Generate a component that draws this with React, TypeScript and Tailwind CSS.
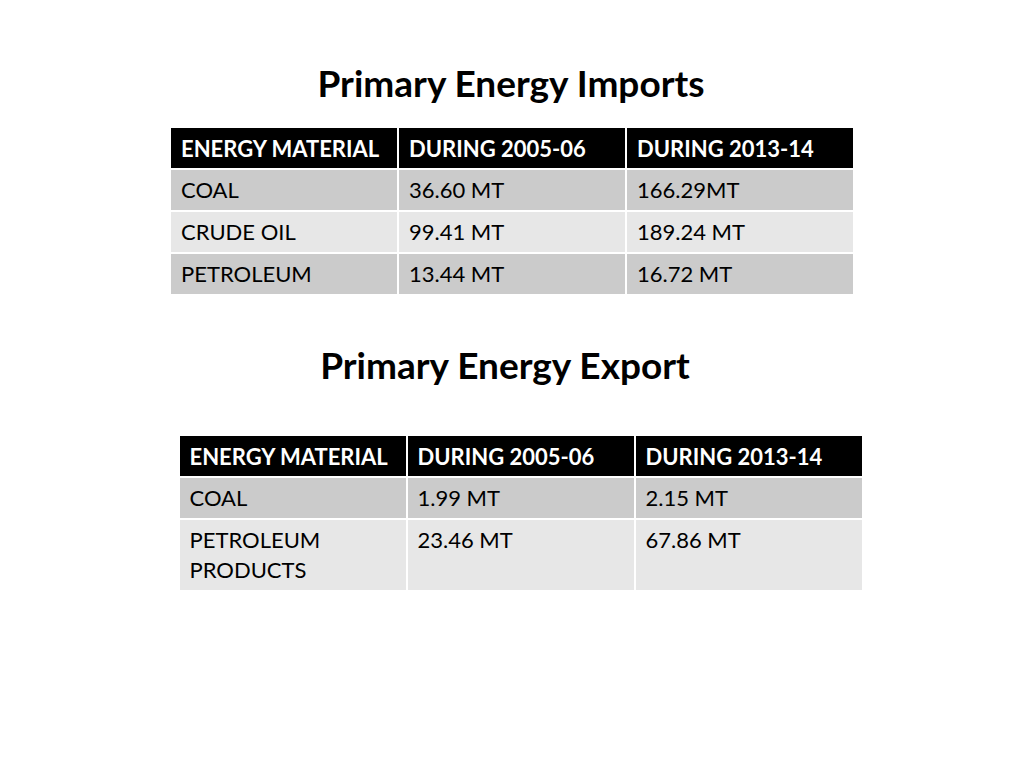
const imports = [
  ["COAL", "36.60 MT", "166.29MT"],
  ["CRUDE OIL", "99.41 MT", "189.24 MT"],
  ["PETROLEUM", "13.44 MT", "16.72 MT"],
];

const exports = [
  ["COAL", "1.99 MT", "2.15 MT"],
  ["PETROLEUM PRODUCTS", "23.46 MT", "67.86 MT"],
];

const head = ["ENERGY MATERIAL", "DURING 2005-06", "DURING 2013-14"];

const Table = ({ rows, className }: { rows: string[][]; className: string }) => {
  return (
    <div className={`grid grid-cols-3 gap-[2px] w-[682px] text-[22px] text-black ${className}`}>
      {head.map((h) => (
        <div key={h} className="bg-black text-white font-bold px-[10px] pt-[6px] pb-[4px] leading-[30px] whitespace-nowrap">
          {h}
        </div>
      ))}
      {rows.map((r, i) =>
        r.map((c, j) => (
          <div
            key={`${i}-${j}`}
            className={`px-[10px] py-[5px] leading-[30px] ${i % 2 === 0 ? "bg-[#cbcbcb]" : "bg-[#e7e7e7]"} ${j === 0 ? "pr-[60px]" : ""}`}
          >
            {c}
          </div>
        ))
      )}
    </div>
  );
};

export default function App() {
  return (
    <div
      className="w-[1024px] h-[768px] bg-white flex flex-col items-center"
      style={{ fontFamily: "Lato, 'Liberation Sans', sans-serif" }}
    >
      <h1 className="mt-[61px] text-[37px] font-bold leading-[44px] text-black mr-[2px]">Primary Energy Imports</h1>
      <Table rows={imports} className="mt-[23px]" />
      <h1 className="mt-[49px] mr-[14px] text-[37px] font-bold leading-[44px] text-black">Primary Energy Export</h1>
      <Table rows={exports} className="mt-[49px] ml-[17px]" />
    </div>
  );
}
